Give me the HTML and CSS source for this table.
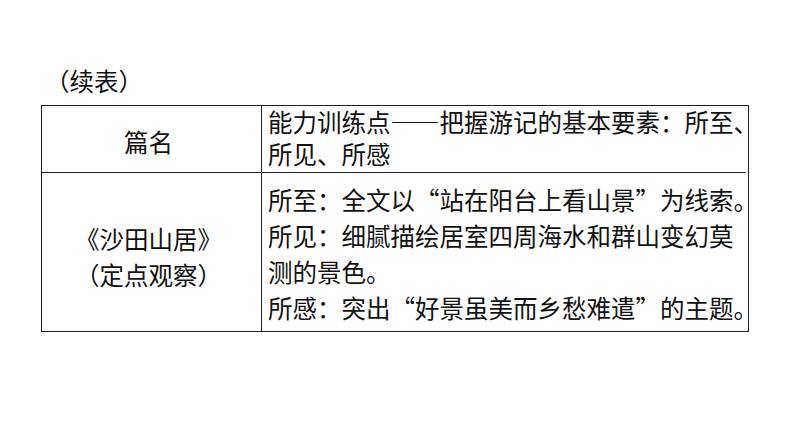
FILE: index.html
```html
<!DOCTYPE html>
<html lang="zh-CN">
<head>
<meta charset="utf-8">
<title>续表</title>
<link rel="stylesheet" href="styles.css">
</head>
<body>
<div class="page">
  <div class="caption">（续表）</div>
  <div class="table">
    <div class="cell left head-left">篇名</div>
    <div class="cell right head-right">
      <div class="line">能力训练点——把握游记的基本要素：所至、</div>
      <div class="line">所见、所感</div>
    </div>
    <div class="cell left body-left">
      <div class="tline">《沙田山居》</div>
      <div class="tline">（定点观察）</div>
    </div>
    <div class="cell right body-right">
      <div class="para"><div class="line">所至：全文以<span class="q open">“</span>站在阳台上看山景<span class="q close">”</span>为线索。</div></div>
      <div class="para">
        <div class="line">所见：细腻描绘居室四周海水和群山变幻莫</div>
        <div class="line">测的景色。</div>
      </div>
      <div class="para"><div class="line">所感：突出<span class="q open">“</span>好景虽美而乡愁难遣<span class="q close">”</span>的主题。</div></div>
    </div>
  </div>
</div>
</body>
</html>
```

FILE: styles.css
```css
html, body {
  margin: 0;
  padding: 0;
  background: #ffffff;
}

body {
  font-family: "Noto Sans CJK SC", "Noto Sans", sans-serif;
  font-weight: 400;
  color: #111111;
  font-size: 24.5px;
}

.page {
  padding: 67px 0 0 41px;
}

.caption {
  line-height: 28px;
  height: 28px;
  margin-left: 4px;
  margin-bottom: 10px;
}

.table {
  display: grid;
  grid-template-columns: 220px 484px;
  grid-template-rows: 67px 158px;
  width: 706px;
  border: 1px solid #1e1e1e;
}

.cell {
  box-sizing: border-box;
}

.left {
  border-right: 1px solid #1e1e1e;
  display: flex;
  flex-direction: column;
  align-items: center;
  justify-content: center;
  padding-right: 6px;
}

.head-left,
.head-right {
  border-bottom: 1px solid #1e1e1e;
}

.head-left {
  padding-top: 6px;
  line-height: 32px;
}

.body-left {
  padding-top: 10px;
}

.tline {
  line-height: 36px;
  white-space: nowrap;
}

.right {
  padding-left: 6px;
}

.head-right {
  padding-top: 0;
}

.head-right .line {
  line-height: 32px;
  white-space: nowrap;
}

.body-right {
  padding-top: 9px;
}

.body-right .line {
  line-height: 36px;
  white-space: nowrap;
}

.q {
  display: inline-block;
  width: 1em;
}

.q.open {
  text-align: right;
}

.q.close {
  text-align: left;
}
```
